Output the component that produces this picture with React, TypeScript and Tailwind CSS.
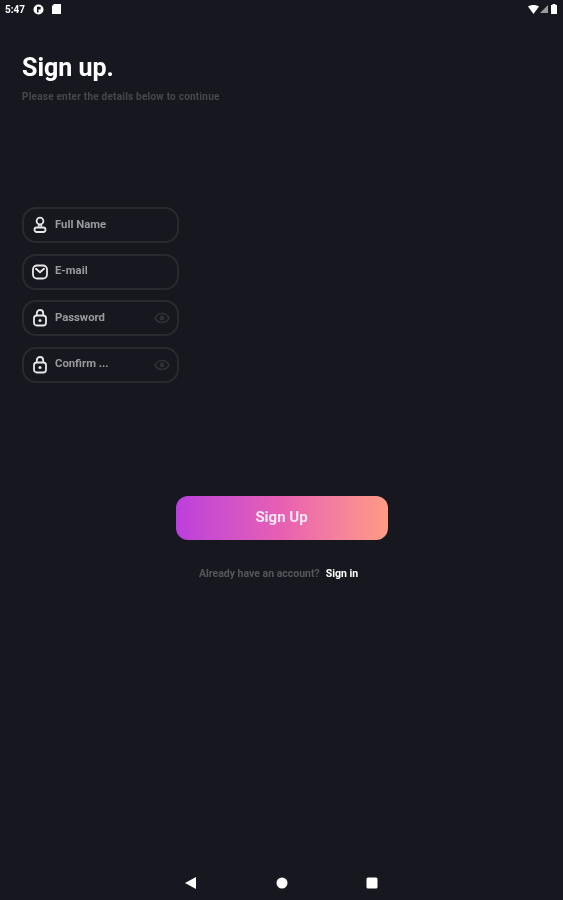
import { ReactNode } from "react";

function UserIcon() {
  return (
    <svg width="16" height="18" viewBox="0 0 16 18" fill="none" stroke="#e8e8ea" strokeWidth="1.8">
      <circle cx="8" cy="5" r="3.400" />
      <path d="M6.800 8.500v2.300M9.200 8.500v2.300" />
      <rect x="2.500" y="11.500" width="11" height="4.500" rx="2.200" />
    </svg>
  );
}

function MailIcon() {
  return (
    <svg width="16" height="16" viewBox="0 0 16 16" fill="none" stroke="#e8e8ea" strokeWidth="1.8">
      <rect x="1" y="1.500" width="14" height="13" rx="4" />
      <path d="M4 4.800 8 8.200l4-3.400" strokeWidth="2" strokeLinecap="round" strokeLinejoin="round" />
    </svg>
  );
}

function LockIcon() {
  return (
    <svg width="14" height="18" viewBox="0 0 14 18" fill="none" stroke="#e8e8ea" strokeWidth="1.8">
      <rect x="1" y="6.500" width="12" height="10" rx="2.800" />
      <path d="M3.800 6.500V4.200a3.200 3.200 0 0 1 6.400 0v2.300" />
      <circle cx="7" cy="11.500" r="1.500" fill="#e8e8ea" stroke="none" />
    </svg>
  );
}

function EyeIcon() {
  return (
    <svg width="16" height="12" viewBox="0 0 16 12" fill="none" stroke="#2f3036" strokeWidth="1.600">
      <path d="M1 6c1.600-3 4-4.500 7-4.500S13.400 3 15 6c-1.600 3-4 4.500-7 4.500S2.600 9 1 6Z" />
      <circle cx="8" cy="6" r="2.400" fill="#2f3036" stroke="none" />
    </svg>
  );
}

function Field({ icon, label, eye }: { icon: ReactNode; label: string; eye?: boolean }) {
  return (
    <div className="flex h-9 w-[157px] items-center rounded-[14px] border-2 border-[#292a2f] pl-[8px] pr-[7px]">
      <span className="flex w-4 justify-center">{icon}</span>
      <span className="ml-[7px] flex-1 text-[11.300px] font-bold text-[#9a9a9e]">{label}</span>
      {eye && <EyeIcon />}
    </div>
  );
}

export default function App() {
  return (
    <div className="flex h-[900px] w-full flex-col bg-[#17181f] font-['Roboto',sans-serif] blur-[0.4px]">
      {/* status bar */}
      <div className="flex h-[18px] items-center justify-between pl-[5px] pr-[6px]">
        <div className="flex items-center">
          <span className="w-[28px] text-[10px] font-bold text-white">5:47</span>
          <svg width="11" height="11" viewBox="0 0 11 11">
            <circle cx="5.500" cy="5.500" r="5" fill="#fff" />
            <path d="M4 2.800h3.600v2.600H5.500V8.500H4Z" fill="#17181f" />
          </svg>
          <svg width="9" height="10" viewBox="0 0 9 10" className="ml-[8px]">
            <path d="M2 0h7v10H0V2Z" fill="#fff" />
          </svg>
        </div>
        <div className="flex items-center gap-[1px]">
          <svg width="11" height="9" viewBox="0 0 11 9">
            <path d="M0 1.500C3.300-.5 7.700-.5 11 1.500L5.500 9Z" fill="#fff" />
          </svg>
          <svg width="8" height="8" viewBox="0 0 8 8">
            <path d="M8 0v8H0Z" fill="#9a9a9e" />
          </svg>
          <svg width="6" height="10" viewBox="0 0 6 10" className="ml-[2px]">
            <path d="M1.500 0h3v1H6v9H0V1h1.500Z" fill="#fff" />
          </svg>
        </div>
      </div>

      <div className="flex flex-1 flex-col px-[22px]">
        <h1 className="mt-[33px] text-[25px] font-bold leading-[34px] text-white">Sign up.</h1>
        <p className="mt-[5px] text-[10px] font-bold leading-[14px] tracking-[0.23px] text-[#47484e]">
          Please enter the details below to continue
        </p>

        <div className="mt-[103px] flex flex-col gap-[10.5px]">
          <Field icon={<UserIcon />} label="Full Name" />
          <Field icon={<MailIcon />} label="E-mail" />
          <Field icon={<LockIcon />} label="Password" eye />
          <Field icon={<LockIcon />} label="Confirm ..." eye />
        </div>

        <div className="mt-[113px] flex flex-col items-center">
          <button className="h-[44px] w-[212px] rounded-[12px] bg-gradient-to-r from-[#bb3edd] via-[#e85fb2] to-[#ff9b84] text-[15px] font-bold text-[#fbe6f4]">
            Sign Up
          </button>
          <div className="mr-[6px] mt-[27px] flex items-center gap-[6px] text-[10.500px] font-bold leading-[14px]">
            <span className="text-[#55565b]">Already have an account?</span>
            <span className="text-white">Sign in</span>
          </div>
        </div>
      </div>

      {/* nav bar */}
      <div className="flex h-[34px] items-start justify-center gap-[74px] pt-[10px]">
        <svg width="16" height="14" viewBox="0 0 16 14">
          <path d="M12 1v12L1 7Z" fill="#fff" />
        </svg>
        <svg width="16" height="14" viewBox="0 0 16 14">
          <circle cx="8" cy="7" r="5.500" fill="#fff" />
        </svg>
        <svg width="16" height="14" viewBox="0 0 16 14">
          <rect x="2.500" y="1.500" width="11" height="11" rx="1.500" fill="#fff" />
        </svg>
      </div>
    </div>
  );
}
